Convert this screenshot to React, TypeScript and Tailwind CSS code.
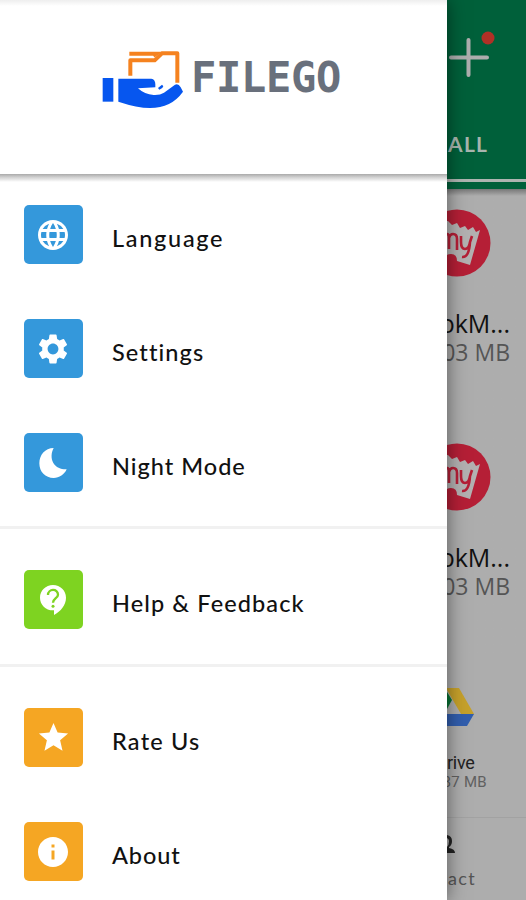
import React from 'react';
import { MdInfo, MdLanguage, MdSettings, MdStar } from 'react-icons/md';

const MoonIcon: React.FC = () => (
  <svg viewBox="55 57 82 90" className="mr-[2px] h-[30px] w-[28px]" fill="currentColor">
    <path d="M98 57C72 57 55 78 55 103C55 129 73 147 98 147C115 147 130 137 137 121C122 122 105 116 97 102C89 87 91 70 98 57Z" />
  </svg>
);

const HelpIcon: React.FC = () => (
  <svg viewBox="59 467 78 90" className="mr-[1px] h-[30px] w-[26px]">
    <path fill="currentColor" d="M98 467C76 467 59 484 59 505C59 526 76 543 98 543H101V557C121 546 137 527 137 505C137 484 120 467 98 467Z" />
    <path fill="none" stroke="#7ed321" strokeWidth="7" d="M83 497C83 477 113 477 113 496C113 506 98 507 98 520" />
    <circle cx="98" cy="531" r="4.5" fill="#7ed321" />
  </svg>
);

const menuGroups = [
  [
    { title: 'Language', icon: <MdLanguage className="mr-px size-9" />, color: 'bg-[#3498db]', spacing: 'tracking-[1.7px]' },
    { title: 'Settings', icon: <MdSettings className="mr-px size-9" />, color: 'bg-[#3498db]', spacing: 'tracking-[1.1px]' },
    { title: 'Night Mode', icon: <MoonIcon />, color: 'bg-[#3498db]', spacing: 'tracking-[1px]' },
  ],
  [
    { title: 'Help & Feedback', icon: <HelpIcon />, color: 'bg-[#7ed321]', spacing: 'tracking-[1.1px]' },
  ],
  [
    { title: 'Rate Us', icon: <MdStar className="mr-px size-[35px]" />, color: 'bg-[#f5a623]', spacing: 'tracking-[1.2px]' },
    { title: 'About', icon: <MdInfo className="mr-px size-9" />, color: 'bg-[#f5a623]', spacing: 'tracking-[0.9px]' },
  ],
];

const Logo: React.FC = () => (
  <div className="flex items-start pl-[100px] pt-[48px]">
    <svg viewBox="30 39 255 186" className="h-[62px] w-[85px] shrink-0">
      <g fill="none" stroke="#f5821f" strokeWidth="12">
        <path d="M121 122V76H194L216 55H262V143" strokeLinejoin="round" />
        <path d="M118 56H199L190 63" />
      </g>
      <path fill="#0656ef" d="M38 129H70V200H38Z" />
      <path
        fill="#0656ef"
        d="M85 131H184Q196 133 196 148V157L144 160Q163 178 191 180Q210 181 222 173L255 149Q265 144 272 157L279 170Q244 219 180 219Q142 219 85 200Z"
      />
      <path fill="#0656ef" d="M204 159L216 149L220 154Q218 162 208 164Z" />
    </svg>
    <span className="ml-[6px] mt-[5px] font-['DejaVu_Sans_Mono',monospace] text-[42px] font-bold leading-[50px] tracking-[-0.3px] text-[#69707c]">
      FILEGO
    </span>
  </div>
);

const TicketBadge: React.FC = () => (
  <svg viewBox="24 0 44 68" className="h-[68px] w-[44px] shrink-0">
    <circle cx="34" cy="34" r="33.5" fill="#b51f36" />
    <path
      fill="#b3b1b1"
      d="M10 13L25 12L29 16L34 14L37 19L42 17L45 21L50 18L53 23L57 21L47 56L34 52Q34 45 28 45Q23 45 22 49L10 46Z"
    />
    {/* ticket lettering */}
    <g fill="none" stroke="#b51f36" strokeWidth="2.6">
      <path d="M24 25Q26 25 26 29V40M26 29Q27 25 30 25Q34 25 34 30V41" />
      <path d="M38 27V33Q38 40 42 40Q46 40 47 33L49 27M47 33Q46 49 39 48" />
    </g>
  </svg>
);

const AppEntry: React.FC = () => (
  <div className="h-[234px] pt-[19px]">
    <TicketBadge />
    <div className="flex flex-col items-end whitespace-nowrap pr-[16px] font-['Open_Sans',sans-serif]">
      <span className="mt-[32px] text-[25px] leading-[29px] text-[#111111]">okM...</span>
      <span className="text-[23px] leading-[29px] text-[#555555]">03 MB</span>
    </div>
  </div>
);

const FilesPane: React.FC = () => (
  <div className="h-full w-[79px] shrink-0 overflow-hidden bg-[#adadad]">
    <div className="h-[189px] bg-[#00603a]">
      <div className="flex h-[129px] pt-[30px]">
        <svg viewBox="0 0 60 60" className="h-[60px] w-[60px]">
          <path d="M21.5 10V45M4 27.5H40" fill="none" stroke="#adadad" strokeWidth="4" strokeLinecap="round" />
          <circle cx="41" cy="8" r="6.5" fill="#b03026" />
        </svg>
      </div>
      <div className="h-[50px] pl-px font-['Lato',sans-serif] text-[21px] font-bold leading-[30px] tracking-[1.3px] text-[#a8b5ae]">ALL</div>
      <div className="h-[3px] bg-[#aeb5b1]" />
    </div>
    <div className="h-[469px] bg-linear-to-b from-[#777777] from-0% to-[#adadad] to-[7px] pt-px">
      <AppEntry />
      <AppEntry />
    </div>
    <div className="h-[160px] border-b border-[#a2a2a2] pt-[30px] font-['Roboto',sans-serif]">
      <svg viewBox="0 0 27 38" className="h-[38px] w-[27px]">
        <path fill="#c6a12b" d="M0 0H12L27 26H14L0 2Z" />
        <path fill="#087434" d="M0 4L5 12L0 21Z" />
        <path fill="#315eae" d="M0 26H27L20 38H0Z" />
      </svg>
      <div className="mt-[27px] w-[27px] text-[18px] leading-[20px] tracking-[-0.3px] text-[#222222]">rive</div>
      <div className="flex w-[40px] justify-end whitespace-nowrap text-[15px] leading-[18px] tracking-[0.3px] text-[#606060]">87 MB</div>
    </div>
    <div className="pt-[15px]">
      <svg viewBox="0 0 8 22" className="h-[22px] w-[8px]">
        <path fill="#222222" d="M0 2Q5 3 5 8Q5 12 2 14V15Q8 16 8 20H0V14Q2 12 2 8Q2 6 0 5Z" />
      </svg>
      <div className="mt-[11px] pl-px font-['Lato',sans-serif] text-[18px] leading-[24px] tracking-[1.4px] text-[#555555]">act</div>
    </div>
  </div>
);

const App: React.FC = () => {
  return (
    <div className="flex h-[900px] w-[526px] overflow-hidden bg-[#adadad]">
      {/* Navigation drawer */}
      <aside className="relative z-10 flex h-full w-[447px] shrink-0 flex-col bg-white shadow-[0_0_18px_rgba(0,0,0,0.5)]">
        <header className="h-[174px] shrink-0 bg-linear-to-b from-[#eeeeee] to-white to-[6px]">
          <Logo />
        </header>
        <div className="h-[8px] shrink-0 bg-linear-to-b from-[#aaaaaa] via-[#d0d0d0] via-40% to-white" />
        <nav className="font-['Lato',sans-serif]">
          {menuGroups.map((group, index) => (
            <div
              key={group[0].title}
              className={index === 0 ? 'flex flex-col gap-[55px] pb-[34px] pt-[23px]' : 'flex flex-col gap-[55px] border-t-[3px] border-[#f1f1f1] pb-[35px] pt-[41px]'}
            >
              {group.map((item) => (
                <div key={item.title} className="-mb-px flex h-[60px] items-start gap-[29px] pl-[24px]">
                  <div className={`flex size-[59px] items-center justify-center rounded-[5px] text-white ${item.color}`}>
                    {item.icon}
                  </div>
                  <span className={`pt-[18px] text-[23.5px] font-medium leading-[30px] text-[#111111] ${item.spacing}`}>
                    {item.title}
                  </span>
                </div>
              ))}
            </div>
          ))}
        </nav>
      </aside>
      {/* File list underneath */}
      <FilesPane />
    </div>
  );
};

export default App;
